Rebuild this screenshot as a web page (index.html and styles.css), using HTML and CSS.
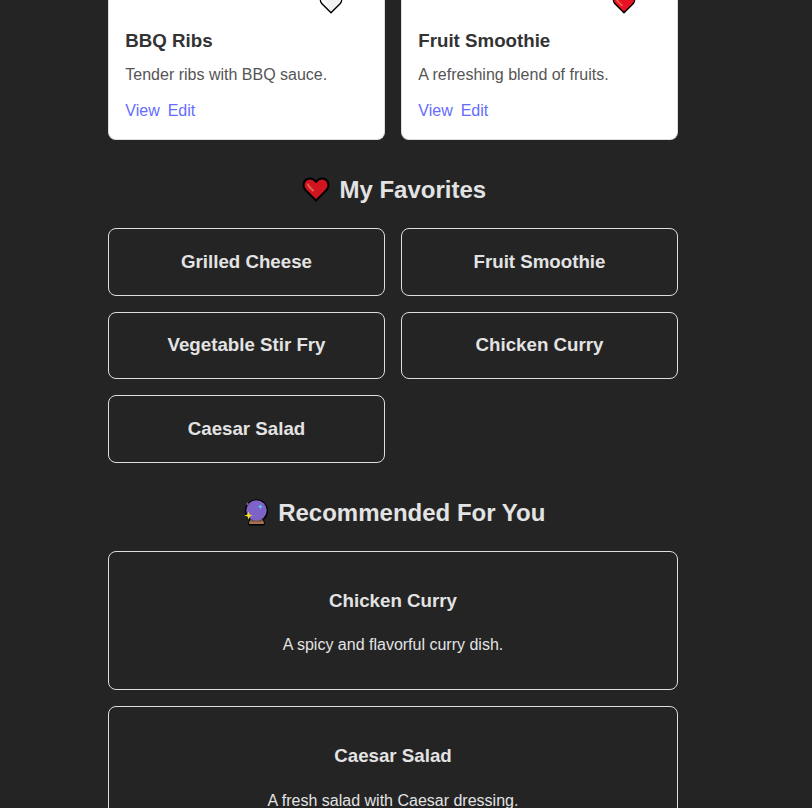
FILE: index.html
```html
<!DOCTYPE html>
<html lang="en">
<head>
<meta charset="utf-8">
<title>Recipes</title>
<link rel="stylesheet" href="styles.css">
</head>
<body>
<main class="page">
  <section class="grid recipes">
    <article class="recipe">
      <svg class="like" viewBox="0 0 24 22"><path d="M12 20.800 2.700 11.500C-1.500 6 5-1 12 5c7-6 13.500 1 9.300 6.500z" fill="#f2f2f2" stroke="#000" stroke-width="1.400"/><path d="M4 8.500 9 14" stroke="#fff" stroke-width="2"/></svg>
      <h3>BBQ Ribs</h3>
      <p>Tender ribs with BBQ sauce.</p>
      <div class="links"><a>View</a><a>Edit</a></div>
    </article>
    <article class="recipe">
      <svg class="like" viewBox="0 0 24 22"><path d="M12 20.800 2.700 11.500C-1.500 6 5-1 12 5c7-6 13.500 1 9.300 6.500z" fill="#e81224" stroke="#000" stroke-width="1.400"/><path d="M5 8.500 10 13.500" stroke="#f4674e" stroke-width="1.600" stroke-linecap="round"/></svg>
      <h3>Fruit Smoothie</h3>
      <p>A refreshing blend of fruits.</p>
      <div class="links"><a>View</a><a>Edit</a></div>
    </article>
  </section>
  <h2><svg class="heart" viewBox="0 0 28 26"><path d="M14 23.500 3.500 13C.3 9.500 1.200 3.500 5.500 2 9 .9 12 2.300 14 5c2-2.700 5-4.100 8.500-3 4.300 1.500 5.200 7.500 2 11z" fill="#d01520" stroke="#000" stroke-width="2" stroke-linejoin="round"/><path d="M6 7.500c.3 1.800 3 4 5 6" fill="none" stroke="#dd6350" stroke-width="2" stroke-linecap="round"/></svg><span>My Favorites</span></h2>
  <section class="grid favorites">
    <article>Grilled Cheese</article>
    <article>Fruit Smoothie</article>
    <article>Vegetable Stir Fry</article>
    <article>Chicken Curry</article>
    <article>Caesar Salad</article>
  </section>
  <h2><svg class="ball" viewBox="0 0 26 28"><circle cx="13.500" cy="11.800" r="11.600" fill="#000"/><path d="M7 20h13q2 2 2 5-.2 1.500-2 1.500H7q-1.800 0-2-1.500 0-3 2-5z" fill="#000"/><path d="M7.500 20.500h12l1.600 3.300q.2 1.300-1.300 1.300H7.200q-1.500 0-1.300-1.300z" fill="#a47353"/><path d="M7.500 20.500h12l.6 1.400c-4 1.300-9 1.300-13.200 0z" fill="#76503c"/><circle cx="13.500" cy="11.500" r="10.200" fill="#7d62c8"/><path d="m5.500 12.400 1.100 3 3 1.100-3 1.100-1.100 3-1.100-3-3-1.100 3-1.100z" fill="#f8df1c"/><path d="m17.300 5.300.7 1.700 1.700.7-1.700.7-.7 1.700-.7-1.700-1.700-.7 1.700-.7z" fill="#55d5f2"/><path d="m4.500 3 .5 1.400 1.400.5-1.400.5-.5 1.400-.5-1.400-1.400-.5 1.400-.5z" fill="#a35f83"/></svg><span>Recommended For You</span></h2>
  <section class="recommended">
    <article><h3>Chicken Curry</h3><p>A spicy and flavorful curry dish.</p></article>
    <article><h3>Caesar Salad</h3><p>A fresh salad with Caesar dressing.</p></article>
  </section>
</main>
</body>
</html>
```
FILE: styles.css
```css
* { box-sizing: border-box; }
html { overflow: hidden; }
body { margin: 0; height: 808px; overflow: hidden; background: #242424; color: #e3e3e3; font: 16px/24px "Liberation Sans", Arial, sans-serif; }
.page { width: 570px; margin-left: 108px; }
.grid { display: grid; grid-template-columns: 1fr 1fr; gap: 16px; }
.recipe { height: 140px; background: #fff; border: 1px solid #ddd; border-top: 0; border-radius: 0 0 8px 8px; padding: 0 16.300px; color: #555; }
.like { display: block; width: 24px; height: 22px; margin: -8px 0 0 194px; }
.recipe h3 { margin: 13px 0 0; font-size: 18.720px; line-height: 28px; color: #333; }
.recipe p { margin: 8px 0 0; }
.links { display: flex; gap: 8px; margin-top: 12px; color: #646cff; }
h2 { display: flex; justify-content: center; align-items: center; gap: 9.500px; height: 36px; margin: 32px 0 20px; padding-left: 2px; font-size: 24px; }
.heart { width: 28px; height: 26px; }
.ball { width: 26px; height: 28px; }
.favorites article { height: 67.500px; border: 1px solid #ddd; border-radius: 8px; display: flex; align-items: center; justify-content: center; font-weight: bold; font-size: 18.720px; }
.recommended { display: grid; gap: 16px; text-align: center; }
.recommended article { height: 139px; border: 1px solid #ddd; border-radius: 8px; padding: 35px 16px; }
.recommended h3 { margin: 0; font-size: 18.720px; line-height: 28px; }
.recommended p { margin: 18px 0 0; }
.recommended article:last-child p { margin-top: 19px; }
```
